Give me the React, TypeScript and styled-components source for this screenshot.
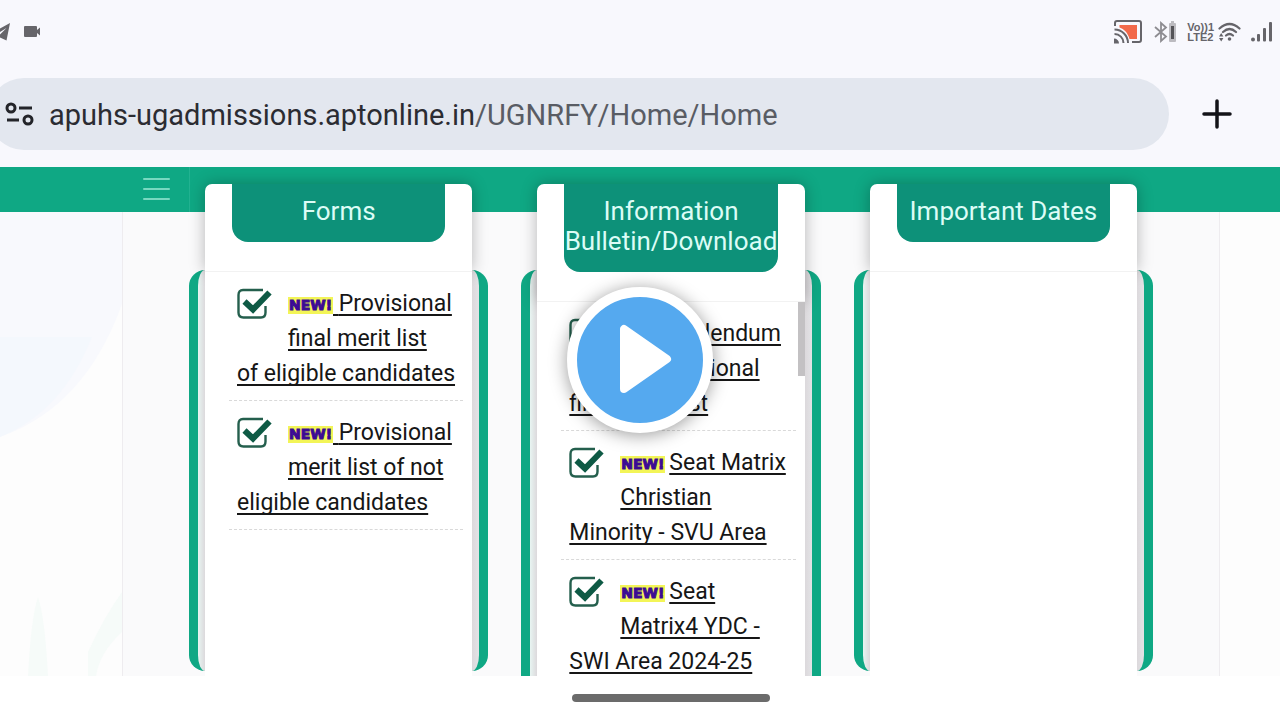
import React from "react";
import styled, { createGlobalStyle } from "styled-components";

const GlobalStyle = createGlobalStyle`
  *, *::before, *::after { box-sizing: border-box; }
  body { margin: 0; background: #fff; }
  button { font: inherit; border: 0; padding: 0; background: none; cursor: pointer; }
  svg { display: block; }
`;

const green = "#0fa884";
const deepGreen = "#0d9179";

const Screen = styled.div`
  position: relative;
  display: flex;
  flex-direction: column;
  height: 100vh;
  overflow: hidden;
  font-family: Roboto, "Liberation Sans", sans-serif;
  color: #161616;
`;

const BrowserTop = styled.header`
  background: #f8f8fd;
  padding-bottom: 17px;
`;

const StatusBar = styled.div`
  display: flex;
  justify-content: space-between;
  align-items: center;
  padding: 17px 7px 31px 0;
`;

const StatusGroup = styled.div<{ $gap: number }>`
  display: flex;
  align-items: center;
  gap: ${(p) => p.$gap}px;
  height: 30px;
  color: #66656a;
`;

const Radios = styled.div`
  display: flex;
  align-items: center;
  gap: 4px;
`;

const Volte = styled.span`
  font: 700 11px/10px "Liberation Sans", sans-serif;
  white-space: nowrap;
`;

const AddressRow = styled.form`
  display: flex;
  align-items: center;
  margin-left: -12px;
`;

const AddressBar = styled.div`
  flex: 1;
  display: flex;
  align-items: center;
  gap: 14px;
  height: 72px;
  padding-left: 17px;
  border-radius: 36px;
  background: #e3e7ef;
`;

const Url = styled.a`
  padding-top: 2px;
  font-size: 29px;
  line-height: 40px;
  color: #2b2c32;
  text-decoration: none;
  white-space: nowrap;
`;

const UrlPath = styled.span`
  color: #595c64;
`;

const NewTab = styled.button`
  width: 111px;
  height: 72px;
  padding-left: 33px;
`;

const Page = styled.main`
  flex: 1;
  min-height: 0;
  position: relative;
  overflow: hidden;
  background: #fdfdfd;
`;

const NavBar = styled.nav`
  display: flex;
  height: 45px;
  padding-left: 122px;
  background: ${green};
`;

const MenuButton = styled.button`
  display: flex;
  flex-direction: column;
  gap: 8px;
  width: 68px;
  padding: 11px 19px 11px 21px;
  border-right: 1px solid #22b291;
`;

const MenuLine = styled.span`
  height: 2px;
  border-radius: 1px;
  background: #77d8c0;
`;

const Backdrop = styled.svg`
  position: absolute;
  left: 0;
  top: 45px;
`;

const Board = styled.div`
  position: relative;
  display: grid;
  grid-template-columns: repeat(3, 1fr);
  align-items: start;
  gap: 33px;
  margin: 0 60px 0 122px;
  padding: 58px 66px 20px;
  border: solid #eeecef;
  border-width: 0 1px;
  background: #fafafb;
`;

const Frame = styled.section`
  border: solid ${green};
  border-width: 0 9px;
  border-radius: 16px;
  padding: 0 7px;
  background: linear-gradient(90deg, #e8f5f2, #dcd9dc 7px, #dcd9dc calc(100% - 7px), #e3e3e6);
`;

const Panel = styled.div`
  margin: -86px 0 -10px;
`;

const PanelHead = styled.div`
  padding: 0 27px 29px;
  border-radius: 7px 7px 0 0;
  background: #fff;
  box-shadow: 0 0 16px rgba(0, 0, 0, 0.28);
`;

const PanelTitle = styled.h2`
  display: flex;
  flex-direction: column;
  align-items: center;
  margin: 0;
  padding: 12px 0 16px;
  border-radius: 0 0 16px 16px;
  background: ${deepGreen};
  color: #dcfcf6;
  font-size: 26px;
  font-weight: 400;
  line-height: 30px;
  white-space: nowrap;
`;

const PanelBody = styled.div`
  position: relative;
  height: 410px;
  overflow: hidden;
  padding: 0 9px 0 24px;
  border-top: 1px solid #f2f2f2;
  background: #fff;
`;

const ScrollThumb = styled.div`
  position: absolute;
  top: 0;
  right: 0;
  width: 7px;
  height: 74px;
  background: #c3c1c3;
`;

const Notices = styled.ul`
  margin: 0;
  padding: 0;
  list-style: none;
`;

const Notice = styled.li`
  padding: 14px 0 9px 8px;
  border-bottom: 1px dashed #d9d9d9;
`;

const CheckSlot = styled.span`
  float: left;
  width: 51px;
  height: 50px;
  padding-top: 2px;
`;

const NoticeLink = styled.a`
  color: #161616;
  font-size: 23px;
  line-height: 35px;
  white-space: nowrap;
  text-decoration: underline;
  text-decoration-thickness: 2px;
  text-underline-offset: 3px;
  text-decoration-skip-ink: none;
`;

const NewBadge = styled.span`
  display: inline-block;
  width: 45px;
  background: #f3f557;
  color: #3c0a94;
  font: 700 14px/17px "DejaVu Sans", sans-serif;
  -webkit-text-stroke: 1px #3c0a94;
  text-align: center;
  vertical-align: 1px;
`;

const GestureArea = styled.footer`
  display: flex;
  justify-content: center;
  padding: 18px 0 18px 62px;
  background: #fff;
`;

const GesturePill = styled.div`
  width: 198px;
  height: 8px;
  border-radius: 4px;
  background: #6b6b6b;
`;

const PlayButton = styled.button`
  position: absolute;
  top: 50%;
  left: 50%;
  transform: translate(-50%, -50%);
  width: 146px;
  height: 146px;
  border: 10px solid #fff;
  border-radius: 50%;
  background: #55a9ef;
  box-shadow: 0 2px 18px rgba(0, 0, 0, 0.4);
`;

const TelegramIcon = () => (
  <svg width="10" height="20" viewBox="0 0 10 20" aria-hidden="true">
    <path d="M0 6.500 10 1 6.500 18.500 0 15.500V12.500L6.500 6 0 10Z" fill="currentColor" />
  </svg>
);

const CameraIcon = () => (
  <svg width="17" height="14" viewBox="0 0 17 14" aria-hidden="true">
    <rect y="1" width="13" height="11" rx="1" fill="currentColor" />
    <path d="M13 5 16 2.500v8L13 8Z" fill="currentColor" />
  </svg>
);

const CastIcon = () => (
  <svg width="30" height="26" viewBox="0 0 30 26" fill="none" stroke="currentColor" aria-hidden="true">
    <path d="M6.500 6H24v14h-7.500C15 14 11 10 6.500 8.500Z" fill="#f2694a" stroke="none" />
    <path d="M2 7V4q0-2 2-2h22q2 0 2 2v17q0 2-2 2h-7" strokeWidth="2" />
    <path d="M1.500 10.500A13.500 13.500 0 0 1 15 24M1.500 15A9 9 0 0 1 10.500 24" strokeWidth="2" />
    <path d="M1 19.500V24.500H6A5 5 0 0 0 1 19.500Z" fill="currentColor" stroke="none" />
  </svg>
);

const BluetoothIcon = () => (
  <svg width="24" height="22" viewBox="0 0 24 22" fill="none" aria-hidden="true">
    <path d="M2 6 13 15.500 8 20V2L13 6.500 2 16" stroke="#8d8c91" strokeWidth="1.800" />
    <rect x="16" y="2" width="7" height="19" rx="1" fill="#bcbbc0" />
    <rect x="18" y="0" width="3" height="3" fill="#bcbbc0" />
    <rect x="18" y="5" width="3" height="13" fill="#545358" />
  </svg>
);

const WifiIcon = () => (
  <svg width="23" height="20" viewBox="0 0 23 20" fill="none" stroke="currentColor" strokeWidth="2.200" aria-hidden="true">
    <path d="M1.500 6.500Q11.500-2.500 21.500 6.500M5 10Q11.500 4 18 10M8 13.500Q11.500 10.500 15 13.500" strokeLinecap="round" />
    <circle cx="11.500" cy="17" r="1.800" fill="currentColor" stroke="none" />
    <path d="M1 14.500 3.200 11 5.400 14.500ZM1 16 3.200 19.500 5.400 16Z" fill="currentColor" stroke="none" />
  </svg>
);

const SignalIcon = () => (
  <svg width="22" height="20" viewBox="0 0 22 20" fill="currentColor" aria-hidden="true">
    <circle cx="2" cy="17.500" r="2" />
    <rect x="6" y="12" width="3" height="7.500" rx="1" />
    <rect x="12" y="6" width="3" height="13.500" rx="1" />
    <rect x="18" y="0" width="3" height="19.500" rx="1" />
  </svg>
);

const SiteSettingsIcon = () => (
  <svg width="30" height="26" viewBox="0 0 30 26" fill="none" stroke="#232429" strokeWidth="3" aria-hidden="true">
    <circle cx="6" cy="7" r="4" />
    <path d="M14 7H27M2 19H14" />
    <circle cx="23" cy="19" r="4" />
  </svg>
);

const PlusIcon = () => (
  <svg width="30" height="30" viewBox="0 0 30 30" stroke="#131318" strokeWidth="3.500" strokeLinecap="round" aria-hidden="true">
    <path d="M15 2V28M2 15H28" />
  </svg>
);

const CheckIcon = () => (
  <svg width="36" height="32" viewBox="0 0 36 32" fill="none" aria-hidden="true">
    <path
      d="M26 2H6Q1.500 2 1.500 7V24.500Q1.500 29.500 6.500 29.500H24Q28.500 29.500 28.500 24.500V18"
      stroke="#245f4d"
      strokeWidth="2.400"
    />
    <path d="M7.500 13.500 16 21.500 32.500 4.500" stroke="#0e5a45" strokeWidth="6" />
  </svg>
);

const PlayIcon = () => (
  <svg width="126" height="126" viewBox="0 0 126 126" aria-hidden="true">
    <path
      d="M47 32V92L90 62Z"
      fill="#fff"
      stroke="#fff"
      strokeWidth="8"
      strokeLinejoin="round"
    />
  </svg>
);

type Item = { lines: string[]; spaceUnderlined: boolean };
type Column = { title: string[]; items: Item[]; scrolls?: boolean };

const columns: Column[] = [
  {
    title: ["Forms"],
    items: [
      { lines: ["Provisional", "final merit list", "of eligible candidates"], spaceUnderlined: true },
      { lines: ["Provisional", "merit list of not", "eligible candidates"], spaceUnderlined: true },
    ],
  },
  {
    title: ["Information", "Bulletin/Download"],
    scrolls: true,
    items: [
      { lines: ["Addendum", "to Provisional", "final merit list"], spaceUnderlined: false },
      { lines: ["Seat Matrix", "Christian", "Minority - SVU Area"], spaceUnderlined: false },
      { lines: ["Seat", "Matrix4 YDC -", "SWI Area 2024-25"], spaceUnderlined: false },
    ],
  },
  { title: ["Important Dates"], items: [] },
];

const NoticeItem = ({ item }: { item: Item }) => (
  <Notice>
    <CheckSlot>
      <CheckIcon />
    </CheckSlot>
    <NewBadge>NEW!</NewBadge>
    {!item.spaceUnderlined && " "}
    <NoticeLink href="#notice">
      {item.spaceUnderlined && "\u00a0"}
      {item.lines.map((line, i) => (
        <React.Fragment key={line}>
          {i > 0 && <br />}
          {line}
        </React.Fragment>
      ))}
    </NoticeLink>
  </Notice>
);

export default function App() {
  return (
    <Screen>
      <GlobalStyle />
      <BrowserTop>
        <StatusBar>
          <StatusGroup $gap={14}>
            <TelegramIcon />
            <CameraIcon />
          </StatusGroup>
          <StatusGroup $gap={10}>
            <CastIcon />
            <BluetoothIcon />
            <Radios>
              <Volte>
                Vo))1
                <br />
                LTE2
              </Volte>
              <WifiIcon />
            </Radios>
            <SignalIcon />
          </StatusGroup>
        </StatusBar>
        <AddressRow onSubmit={(e) => e.preventDefault()}>
          <AddressBar>
            <SiteSettingsIcon />
            <Url href="#home">
              apuhs-ugadmissions.aptonline.in<UrlPath>/UGNRFY/Home/Home</UrlPath>
            </Url>
          </AddressBar>
          <NewTab type="button" aria-label="New tab">
            <PlusIcon />
          </NewTab>
        </AddressRow>
      </BrowserTop>

      <Page>
        <NavBar>
          <MenuButton type="button" aria-label="Menu">
            <MenuLine />
            <MenuLine />
            <MenuLine />
          </MenuButton>
        </NavBar>
        <Backdrop width="122" height="464" viewBox="0 0 122 464" aria-hidden="true">
          <path d="M0 0H122V92Q85 195 0 225Z" fill="#f8f9fd" />
          <path d="M0 125H92Q62 200 0 225Z" fill="#f4f8fd" />
          <path d="M28 464Q31 405 38 385Q45 405 48 464Z" fill="#f6fbf9" />
          <path d="M88 464V440Q104 405 122 380V420Q100 440 96 464Z" fill="#f6fbf9" />
        </Backdrop>
        <Board>
          {columns.map((column) => (
            <Frame key={column.title[0]}>
              <Panel>
                <PanelHead>
                  <PanelTitle>
                    {column.title.map((line) => (
                      <span key={line}>{line}</span>
                    ))}
                  </PanelTitle>
                </PanelHead>
                <PanelBody>
                  <Notices>
                    {column.items.map((item) => (
                      <NoticeItem key={item.lines.join(" ")} item={item} />
                    ))}
                  </Notices>
                  {column.scrolls && <ScrollThumb />}
                </PanelBody>
              </Panel>
            </Frame>
          ))}
        </Board>
      </Page>

      <GestureArea>
        <GesturePill />
      </GestureArea>

      <PlayButton type="button" aria-label="Play video">
        <PlayIcon />
      </PlayButton>
    </Screen>
  );
}
